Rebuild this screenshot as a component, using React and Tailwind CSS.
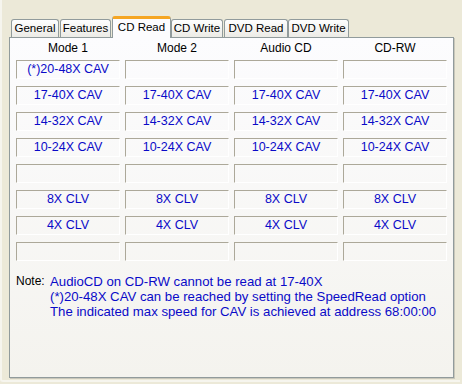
import React from "react";

const tabs = [
  { label: "General", cls: "ml-[9px] w-[48px]" },
  { label: "Features", cls: "ml-[1px] w-[51px]" },
  { label: "CD Read", cls: "ml-[1px] w-[59px]", active: true },
  { label: "CD Write", cls: "w-[52px]" },
  { label: "DVD Read", cls: "ml-[1px] w-[64px]" },
  { label: "DVD Write", cls: "w-[61px]" },
];

const headers = ["Mode 1", "Mode 2", "Audio CD", "CD-RW"];

const rows = [
  ["(*)20-48X CAV", "", "", ""],
  ["17-40X CAV", "17-40X CAV", "17-40X CAV", "17-40X CAV"],
  ["14-32X CAV", "14-32X CAV", "14-32X CAV", "14-32X CAV"],
  ["10-24X CAV", "10-24X CAV", "10-24X CAV", "10-24X CAV"],
  ["", "", "", ""],
  ["8X CLV", "8X CLV", "8X CLV", "8X CLV"],
  ["4X CLV", "4X CLV", "4X CLV", "4X CLV"],
  ["", "", "", ""],
];

const notes = [
  "AudioCD on CD-RW cannot be read at 17-40X",
  "(*)20-48X CAV can be reached by setting the SpeedRead option",
  "The indicated max speed for CAV is achieved at address 68:00:00",
];

function Tab({ label, cls, active }) {
  if (active) {
    return (
      <div
        className={`${cls} relative z-10 -mb-px h-[22px] rounded-t-[3px] border-x border-[#919b9c] border-t-[3px] border-t-[#f5a623] bg-[#fcfcfe] text-center text-[11.5px] leading-[17px] text-black`}
      >
        {label}
      </div>
    );
  }
  return (
    <div
      className={`${cls} h-[18px] rounded-t-[3px] border-x border-t border-[#919b9c] bg-gradient-to-b from-[#fefefe] to-[#ecebe6] text-center text-[11.5px] leading-[17px] text-black`}
    >
      {label}
    </div>
  );
}

export default function App() {
  return (
    <div
      className="h-[384px] w-[462px] overflow-hidden bg-[#ece9d8] text-black"
      style={{ fontFamily: '"Liberation Sans", Arial, sans-serif' }}
    >
      <div className="h-[382px] w-[460px] rounded-bl-[3px] border-b-2 border-l-2 border-[#f6f5ee]">
        {/* Tabs */}
        <div className="flex h-[37px] items-end">
          {tabs.map((t) => (
            <Tab key={t.label} {...t} />
          ))}
        </div>

        {/* Tab page */}
        <div className="ml-[7px] h-[341px] w-[445px] border border-[#919b9c] bg-gradient-to-b from-[#fcfcfe] to-[#f4f3ee] shadow-[1px_1px_0_#c9c7ba]">
          <div className="grid grid-cols-[104px_104px_104px_104px] gap-x-[5px] pl-[6px]">
            {headers.map((h) => (
              <div key={h} className="flex h-[22px] items-center justify-center pb-[2px] text-[12px]">
                {h}
              </div>
            ))}
          </div>

          <div className="grid grid-cols-[104px_104px_104px_104px] gap-x-[5px] gap-y-[7px] pl-[6px]">
            {rows.map((r, i) =>
              r.map((c, j) => (
                <div
                  key={`${i}-${j}`}
                  className="flex h-[19px] items-center justify-center border border-l-[#aca899] border-t-[#aca899] border-b-white border-r-white text-[12.5px] text-[#0a0ac8]"
                >
                  {c}
                </div>
              ))
            )}
          </div>

          <div className="mt-[13px] flex pl-[6px] leading-[15px]">
            <div className="w-[34px] text-[12px] text-black">Note:</div>
            <div className="text-[13.2px] text-[#0a0ac8]">
              {notes.map((n) => (
                <div key={n}>{n}</div>
              ))}
            </div>
          </div>
        </div>
      </div>
    </div>
  );
}
